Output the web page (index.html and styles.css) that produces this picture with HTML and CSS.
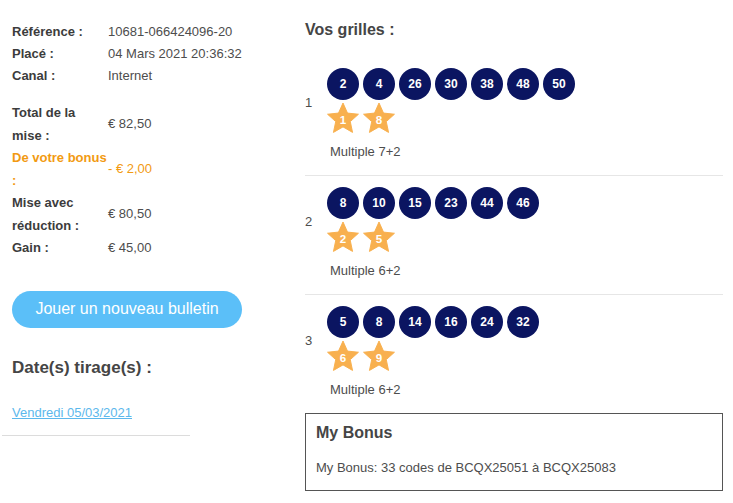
FILE: index.html
```html
<!DOCTYPE html>
<html lang="fr">
<head>
<meta charset="utf-8">
<title>Bulletin</title>
<link rel="stylesheet" href="styles.css">
</head>
<body>
<div class="page">
  <div class="left">
    <div class="info">
      <div class="lbl">Référence :</div><div class="val">10681-066424096-20</div>
      <div class="lbl">Placé :</div><div class="val">04 Mars 2021 20:36:32</div>
      <div class="lbl">Canal :</div><div class="val">Internet</div>
    </div>
    <div class="info info2">
      <div class="lbl">Total de la mise :</div><div class="val">€ 82,50</div>
      <div class="lbl orange">De votre bonus :</div><div class="val orange">- € 2,00</div>
      <div class="lbl">Mise avec réduction :</div><div class="val">€ 80,50</div>
      <div class="lbl">Gain :</div><div class="val">€ 45,00</div>
    </div>
    <button class="btn" type="button">Jouer un nouveau bulletin</button>
    <h2 class="draw-title">Date(s) tirage(s) :</h2>
    <a class="draw-link" href="#">Vendredi 05/03/2021</a>
    <div class="rule"></div>
  </div>

  <div class="right">
    <h2 class="grids-title">Vos grilles :</h2>

    <div class="grille">
      <div class="grille-main">
        <span class="idx">1</span>
        <div class="picks">
          <div class="balls">
            <span class="ball">2</span><span class="ball">4</span><span class="ball">26</span><span class="ball">30</span><span class="ball">38</span><span class="ball">48</span><span class="ball">50</span>
          </div>
          <div class="stars">
            <svg class="star" viewBox="0 0 32 31" width="32" height="31"><polygon points="16,0 20.64,10.41 31.98,11.61 23.51,19.24 25.87,30.39 16,24.7 6.13,30.39 8.49,19.24 0.02,11.61 11.36,10.41"/><text x="16" y="22">1</text></svg>
            <svg class="star" viewBox="0 0 32 31" width="32" height="31"><polygon points="16,0 20.64,10.41 31.98,11.61 23.51,19.24 25.87,30.39 16,24.7 6.13,30.39 8.49,19.24 0.02,11.61 11.36,10.41"/><text x="16" y="22">8</text></svg>
          </div>
        </div>
      </div>
      <div class="mult">Multiple 7+2</div>
    </div>

    <div class="grille">
      <div class="grille-main">
        <span class="idx">2</span>
        <div class="picks">
          <div class="balls">
            <span class="ball">8</span><span class="ball">10</span><span class="ball">15</span><span class="ball">23</span><span class="ball">44</span><span class="ball">46</span>
          </div>
          <div class="stars">
            <svg class="star" viewBox="0 0 32 31" width="32" height="31"><polygon points="16,0 20.64,10.41 31.98,11.61 23.51,19.24 25.87,30.39 16,24.7 6.13,30.39 8.49,19.24 0.02,11.61 11.36,10.41"/><text x="16" y="22">2</text></svg>
            <svg class="star" viewBox="0 0 32 31" width="32" height="31"><polygon points="16,0 20.64,10.41 31.98,11.61 23.51,19.24 25.87,30.39 16,24.7 6.13,30.39 8.49,19.24 0.02,11.61 11.36,10.41"/><text x="16" y="22">5</text></svg>
          </div>
        </div>
      </div>
      <div class="mult">Multiple 6+2</div>
    </div>

    <div class="grille last">
      <div class="grille-main">
        <span class="idx">3</span>
        <div class="picks">
          <div class="balls">
            <span class="ball">5</span><span class="ball">8</span><span class="ball">14</span><span class="ball">16</span><span class="ball">24</span><span class="ball">32</span>
          </div>
          <div class="stars">
            <svg class="star" viewBox="0 0 32 31" width="32" height="31"><polygon points="16,0 20.64,10.41 31.98,11.61 23.51,19.24 25.87,30.39 16,24.7 6.13,30.39 8.49,19.24 0.02,11.61 11.36,10.41"/><text x="16" y="22">6</text></svg>
            <svg class="star" viewBox="0 0 32 31" width="32" height="31"><polygon points="16,0 20.64,10.41 31.98,11.61 23.51,19.24 25.87,30.39 16,24.7 6.13,30.39 8.49,19.24 0.02,11.61 11.36,10.41"/><text x="16" y="22">9</text></svg>
          </div>
        </div>
      </div>
      <div class="mult">Multiple 6+2</div>
    </div>

    <div class="bonus">
      <h3 class="bonus-title">My Bonus</h3>
      <p class="bonus-text">My Bonus: 33 codes de BCQX25051 à BCQX25083</p>
    </div>
  </div>
</div>
</body>
</html>
```

FILE: styles.css
```css
* { box-sizing: border-box; }

html, body {
  margin: 0;
  padding: 0;
  background: #ffffff;
}

body {
  font-family: "Liberation Sans", Arial, sans-serif;
  font-size: 13px;
  color: #4a4a4a;
}

.page {
  display: flex;
  align-items: flex-start;
}

/* ---------- left column ---------- */
.left {
  width: 305px;
  flex: none;
  padding-top: 21px;
}

.info {
  display: grid;
  grid-template-columns: 96px auto;
  column-gap: 0;
  padding-left: 12px;
  line-height: 22px;
  align-items: center;
}

.info2 {
  margin-top: 15px;
  line-height: 22.5px;
}

.lbl {
  font-weight: bold;
  color: #3c3c3c;
}

.val {
  color: #4d4d4d;
}

.orange {
  color: #f29a12;
}

.btn {
  display: block;
  margin: 31px 0 0 12px;
  width: 230px;
  height: 37px;
  border: none;
  border-radius: 19px;
  background: #5bbff8;
  color: #ffffff;
  font-family: "Liberation Sans", Arial, sans-serif;
  font-size: 16px;
  padding: 0;
  cursor: pointer;
}

.draw-title {
  margin: 28px 0 0 12px;
  font-size: 17px;
  line-height: 24px;
  font-weight: bold;
  color: #454545;
}

.draw-link {
  display: inline-block;
  margin: 24px 0 0 12px;
  line-height: 18px;
  color: #5cb8ec;
  text-decoration: underline;
}

.rule {
  margin: 13px 0 0 2px;
  width: 188px;
  height: 1px;
  background: #dcdcdc;
}

/* ---------- right column ---------- */
.right {
  width: 418px;
  flex: none;
  padding-top: 19px;
}

.grids-title {
  margin: 0 0 16px 0;
  font-size: 16px;
  line-height: 22px;
  font-weight: bold;
  color: #454545;
}

.grille {
  padding: 11px 0 14px 0;
  border-bottom: 1px solid #e6e6e6;
}

.grille.last {
  border-bottom: none;
}

.grille-main {
  display: flex;
  align-items: center;
}

.idx {
  width: 22px;
  flex: none;
  padding-top: 4px;
  color: #4d4d4d;
}

.picks {
  display: flex;
  flex-direction: column;
  gap: 3px;
}

.balls,
.stars {
  display: flex;
  gap: 4px;
}

.ball {
  width: 32px;
  height: 32px;
  border-radius: 50%;
  background: #0b1561;
  color: #ffffff;
  font-weight: bold;
  font-size: 12px;
  display: flex;
  align-items: center;
  justify-content: center;
}

.star {
  display: block;
  width: 32px;
  height: 30px;
}

.star polygon {
  fill: #f8b04f;
  stroke: #f8b04f;
  stroke-width: 1;
  stroke-linejoin: round;
}

.star text {
  fill: #ffffff;
  font-family: "Liberation Sans", Arial, sans-serif;
  font-weight: bold;
  font-size: 12px;
  text-anchor: middle;
}

.mult {
  margin-top: 10px;
  padding-left: 25px;
  line-height: 18px;
  color: #4d4d4d;
}

.bonus {
  border: 1px solid #555555;
  padding: 8px 10px 13px 10px;
}

.bonus-title {
  margin: 0;
  font-size: 16px;
  line-height: 22px;
  font-weight: bold;
  color: #454545;
}

.bonus-text {
  margin: 15px 0 0 0;
  line-height: 18px;
  color: #4d4d4d;
}
```
